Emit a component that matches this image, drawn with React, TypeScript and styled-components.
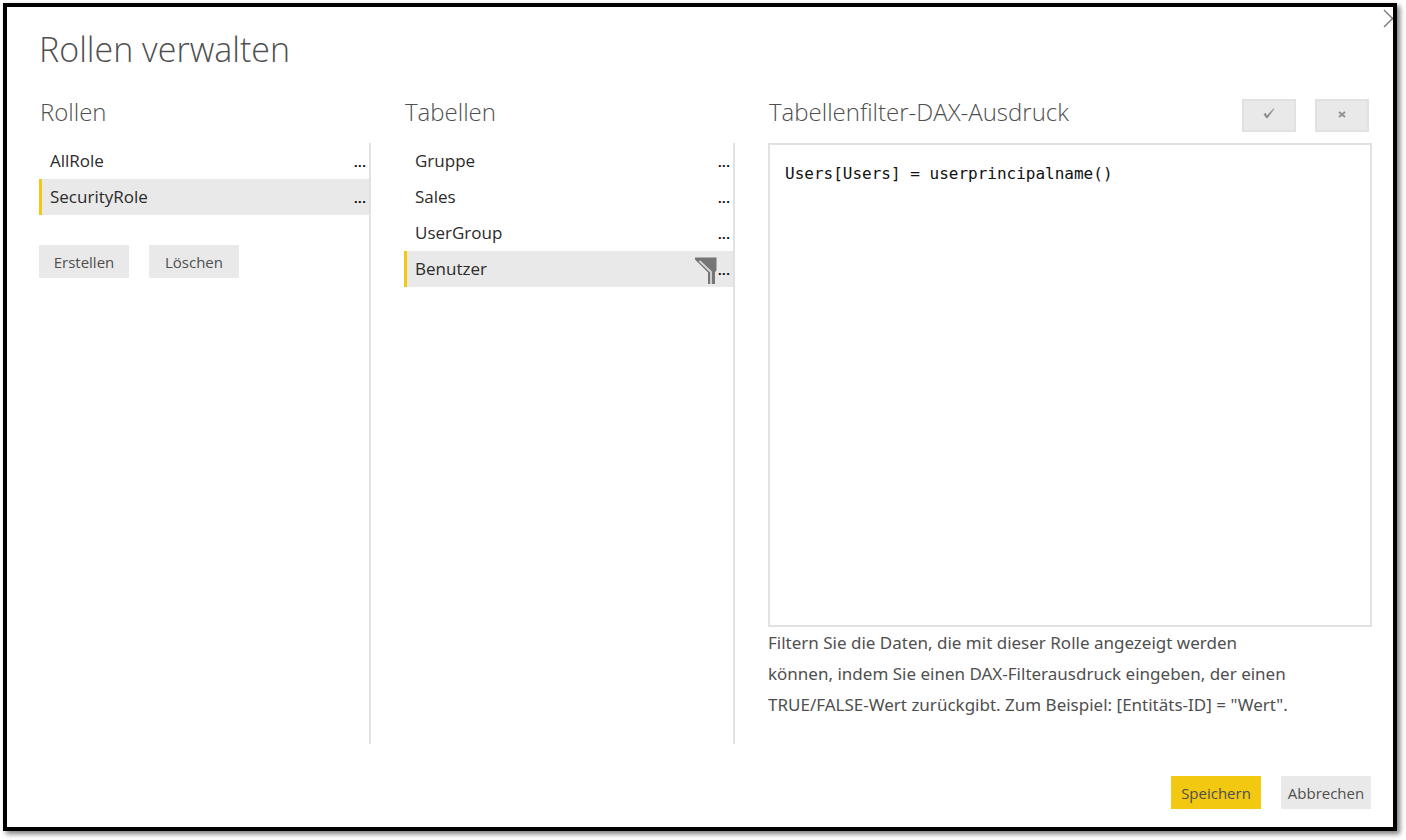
import React, { useState } from "react";
import styled, { createGlobalStyle } from "styled-components";

const colors = {
  text: "#2b2b2b",
  muted: "#4f4f4f",
  line: "#e1e1e1",
  fill: "#e9e9e9",
  accent: "#f2c811",
};

const GlobalStyle = createGlobalStyle`
  *, *::before, *::after { box-sizing: border-box; }
  body {
    margin: 0;
    background: #fff;
    color: ${colors.text};
    font-family: "Open Sans", "Noto Sans", sans-serif;
  }
  button, textarea { font: inherit; color: inherit; }
  h1, h2, p, ul { margin: 0; padding: 0; }
`;

const Page = styled.div`
  display: flex;
  min-height: 100vh;
  padding: 3px 9px 9px 3px;
`;

const Dialog = styled.main`
  position: relative;
  display: flex;
  flex: 1;
  flex-direction: column;
  min-width: 0;
  padding: 19px 21px 18px 32px;
  overflow: hidden;
  border: 4px solid #000;
  background: #fff;
`;

const Shadow = styled.div`
  display: flex;
  flex: 1;
  min-width: 0;
  box-shadow: 3px 3px 5px rgba(0, 0, 0, 0.5);
`;

const CloseButton = styled.button`
  position: absolute;
  top: 2px;
  right: -9px;
  display: flex;
  padding: 0;
  border: 0;
  background: none;
  color: #777;
`;

const Title = styled.h1`
  color: ${colors.muted};
  font-size: 34px;
  font-weight: 300;
  line-height: 46px;
`;

const Columns = styled.div`
  display: grid;
  flex: 1;
  grid-template-columns: 332px 331px minmax(0, 1fr);
  column-gap: 33px;
  padding-top: 8px;
`;

const Column = styled.section`
  display: flex;
  flex-direction: column;
  min-width: 0;
`;

const ColumnHeader = styled.header`
  display: flex;
  align-items: flex-start;
  justify-content: space-between;
  height: 63px;
  padding: 16px 3px 0 1px;
`;

const ColumnTitle = styled.h2`
  color: ${colors.muted};
  font-size: 24px;
  font-weight: 300;
  line-height: 32px;
`;

const ListPane = styled.div`
  flex: 1;
  border-right: 2px solid ${colors.line};
`;

const List = styled.ul`
  list-style: none;
`;

const Row = styled.li<{ $selected: boolean }>`
  display: flex;
  align-items: center;
  height: 36px;
  padding-right: 3px;
  border-left: 3px solid ${(p) => (p.$selected ? colors.accent : "transparent")};
  background: ${(p) => (p.$selected ? colors.fill : "transparent")};
`;

const RowLabel = styled.button`
  flex: 1;
  height: 36px;
  padding: 0 8px;
  border: 0;
  background: none;
  font-size: 17px;
  line-height: 24px;
  text-align: left;
`;

const MoreButton = styled.button`
  padding: 0;
  border: 0;
  background: none;
  color: #000;
  font-size: 15px;
  font-weight: 600;
  line-height: 24px;
`;

const ButtonRow = styled.div<{ $end?: boolean }>`
  display: flex;
  justify-content: ${(p) => (p.$end ? "flex-end" : "flex-start")};
  gap: 20px;
  padding: ${(p) => (p.$end ? "32px 1px 0 0" : "30px 0 0")};
`;

const Button = styled.button<{ $primary?: boolean }>`
  width: 90px;
  height: 33px;
  padding: 0;
  border: 0;
  background: ${(p) => (p.$primary ? colors.accent : colors.fill)};
  color: ${colors.muted};
  font-size: 15px;
  line-height: 24px;
`;

const EditorActions = styled.div`
  display: flex;
  gap: 19px;
  padding-top: 3px;
`;

const IconButton = styled.button`
  display: flex;
  align-items: center;
  justify-content: center;
  width: 54px;
  height: 33px;
  padding: 0 0 4px;
  border: 2px solid ${colors.line};
  background: ${colors.fill};
`;

const Editor = styled.textarea`
  flex: 1;
  width: 100%;
  padding: 17px 15px;
  border: 2px solid ${colors.line};
  outline: 0;
  background: #fff;
  color: #111;
  font-family: "DejaVu Sans Mono", monospace;
  font-size: 16px;
  line-height: 24px;
  resize: none;
`;

const Help = styled.p`
  padding-bottom: 24px;
  color: ${colors.muted};
  font-family: "Noto Sans", sans-serif;
  font-size: 17px;
  line-height: 31px;
`;

const CheckIcon = () => (
  <svg width="12" height="12" viewBox="0 0 12 12" aria-hidden="true">
    <path d="M0.5 6.2 2.4 4.8 4 7.2 10.6 0.4 11.4 0.8 4.6 10.2 3.2 10.2Z" fill="#929292" />
  </svg>
);

const ClearIcon = () => (
  <svg width="8" height="8" viewBox="0 0 8 8" aria-hidden="true">
    <path d="M1 2 7 7M7 2 1 7" stroke="#929292" strokeWidth="2" />
  </svg>
);

const CloseIcon = () => (
  <svg width="19" height="19" viewBox="0 0 19 19" aria-hidden="true">
    <path d="M1 1 18 18M18 1 1 18" stroke="currentColor" strokeWidth="1.3" />
  </svg>
);

const FilterIcon = () => (
  <svg width="23" height="30" viewBox="0 0 23 30" role="img" aria-label="Filter aktiv">
    <path d="M0 3.5H21.5V16L20 18.5V30H13V18.5L0 5.5Z" fill="#757575" />
    <path d="M4.5 7 16 18V30" fill="none" stroke="#d6d6d6" strokeWidth="1.8" />
  </svg>
);

type Item = { name: string; filtered?: boolean };

const roles: Item[] = [{ name: "AllRole" }, { name: "SecurityRole" }];
const tables: Item[] = [
  { name: "Gruppe" },
  { name: "Sales" },
  { name: "UserGroup" },
  { name: "Benutzer", filtered: true },
];

function SelectList({ items, initial }: { items: Item[]; initial: string }) {
  const [selected, setSelected] = useState(initial);
  return (
    <List>
      {items.map(({ name, filtered }) => (
        <Row key={name} $selected={name === selected}>
          <RowLabel type="button" aria-pressed={name === selected} onClick={() => setSelected(name)}>
            {name}
          </RowLabel>
          {filtered && <FilterIcon />}
          <MoreButton type="button" aria-label={`Optionen für ${name}`}>
            ...
          </MoreButton>
        </Row>
      ))}
    </List>
  );
}

export default function App() {
  const [expression, setExpression] = useState("Users[Users] = userprincipalname()");
  return (
    <Page>
      <GlobalStyle />
      <Shadow>
        <Dialog>
          <CloseButton type="button" aria-label="Schließen">
            <CloseIcon />
          </CloseButton>
          <Title>Rollen verwalten</Title>
          <Columns>
            <Column>
              <ColumnHeader>
                <ColumnTitle>Rollen</ColumnTitle>
              </ColumnHeader>
              <ListPane>
                <SelectList items={roles} initial="SecurityRole" />
                <ButtonRow>
                  <Button type="button">Erstellen</Button>
                  <Button type="button">Löschen</Button>
                </ButtonRow>
              </ListPane>
            </Column>
            <Column>
              <ColumnHeader>
                <ColumnTitle>Tabellen</ColumnTitle>
              </ColumnHeader>
              <ListPane>
                <SelectList items={tables} initial="Benutzer" />
              </ListPane>
            </Column>
            <Column>
              <ColumnHeader>
                <ColumnTitle>
                  <label htmlFor="dax">Tabellenfilter-DAX-Ausdruck</label>
                </ColumnTitle>
                <EditorActions>
                  <IconButton type="button" aria-label="Ausdruck überprüfen">
                    <CheckIcon />
                  </IconButton>
                  <IconButton type="button" aria-label="Änderungen verwerfen">
                    <ClearIcon />
                  </IconButton>
                </EditorActions>
              </ColumnHeader>
              <Editor
                id="dax"
                spellCheck={false}
                value={expression}
                onChange={(e) => setExpression(e.target.value)}
              />
              <Help>
                Filtern Sie die Daten, die mit dieser Rolle angezeigt werden
                <br />
                können, indem Sie einen DAX-Filterausdruck eingeben, der einen
                <br />
                TRUE/FALSE-Wert zurückgibt. Zum Beispiel: [Entitäts-ID] = "Wert".
              </Help>
            </Column>
          </Columns>
          <ButtonRow $end>
            <Button type="button" $primary>
              Speichern
            </Button>
            <Button type="button">Abbrechen</Button>
          </ButtonRow>
        </Dialog>
      </Shadow>
    </Page>
  );
}
